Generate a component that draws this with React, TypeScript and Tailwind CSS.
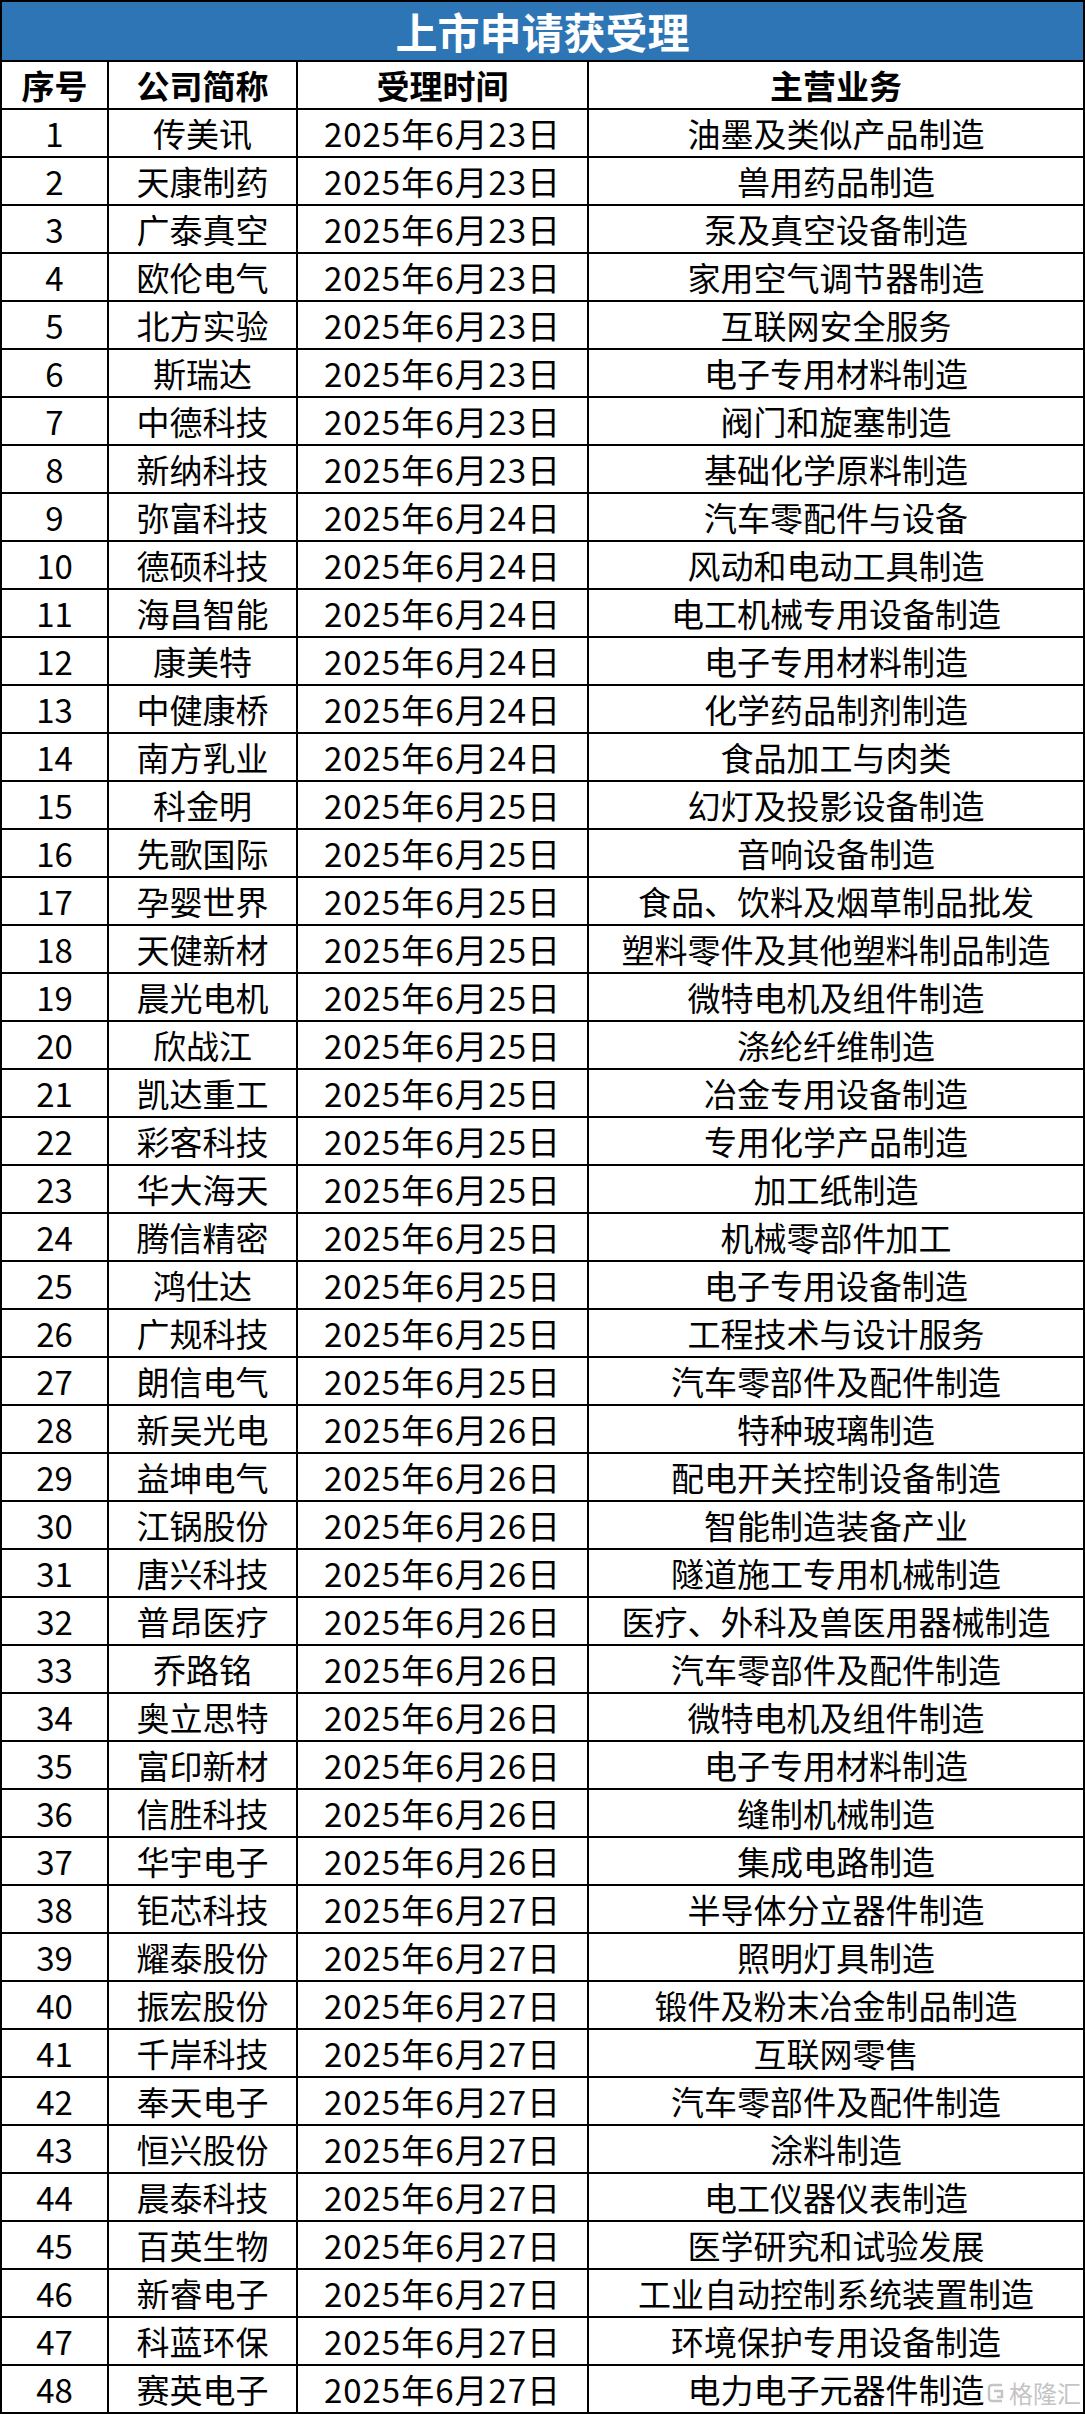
import React from 'react';

type Row = [string, string, string];

// [company, date suffix, business]
const rows: Row[] = [
  ['传美讯', '23', '油墨及类似产品制造'],
  ['天康制药', '23', '兽用药品制造'],
  ['广泰真空', '23', '泵及真空设备制造'],
  ['欧伦电气', '23', '家用空气调节器制造'],
  ['北方实验', '23', '互联网安全服务'],
  ['斯瑞达', '23', '电子专用材料制造'],
  ['中德科技', '23', '阀门和旋塞制造'],
  ['新纳科技', '23', '基础化学原料制造'],
  ['弥富科技', '24', '汽车零配件与设备'],
  ['德硕科技', '24', '风动和电动工具制造'],
  ['海昌智能', '24', '电工机械专用设备制造'],
  ['康美特', '24', '电子专用材料制造'],
  ['中健康桥', '24', '化学药品制剂制造'],
  ['南方乳业', '24', '食品加工与肉类'],
  ['科金明', '25', '幻灯及投影设备制造'],
  ['先歌国际', '25', '音响设备制造'],
  ['孕婴世界', '25', '食品、饮料及烟草制品批发'],
  ['天健新材', '25', '塑料零件及其他塑料制品制造'],
  ['晨光电机', '25', '微特电机及组件制造'],
  ['欣战江', '25', '涤纶纤维制造'],
  ['凯达重工', '25', '冶金专用设备制造'],
  ['彩客科技', '25', '专用化学产品制造'],
  ['华大海天', '25', '加工纸制造'],
  ['腾信精密', '25', '机械零部件加工'],
  ['鸿仕达', '25', '电子专用设备制造'],
  ['广规科技', '25', '工程技术与设计服务'],
  ['朗信电气', '25', '汽车零部件及配件制造'],
  ['新吴光电', '26', '特种玻璃制造'],
  ['益坤电气', '26', '配电开关控制设备制造'],
  ['江锅股份', '26', '智能制造装备产业'],
  ['唐兴科技', '26', '隧道施工专用机械制造'],
  ['普昂医疗', '26', '医疗、外科及兽医用器械制造'],
  ['乔路铭', '26', '汽车零部件及配件制造'],
  ['奥立思特', '26', '微特电机及组件制造'],
  ['富印新材', '26', '电子专用材料制造'],
  ['信胜科技', '26', '缝制机械制造'],
  ['华宇电子', '26', '集成电路制造'],
  ['钜芯科技', '27', '半导体分立器件制造'],
  ['耀泰股份', '27', '照明灯具制造'],
  ['振宏股份', '27', '锻件及粉末冶金制品制造'],
  ['千岸科技', '27', '互联网零售'],
  ['奉天电子', '27', '汽车零部件及配件制造'],
  ['恒兴股份', '27', '涂料制造'],
  ['晨泰科技', '27', '电工仪器仪表制造'],
  ['百英生物', '27', '医学研究和试验发展'],
  ['新睿电子', '27', '工业自动控制系统装置制造'],
  ['科蓝环保', '27', '环境保护专用设备制造'],
  ['赛英电子', '27', '电力电子元器件制造'],
];

const font = { fontFamily: '"Noto Sans CJK SC", "Noto Sans", sans-serif' };

function Cell({ children, className = '' }: { children: React.ReactNode; className?: string }) {
  return (
    <div
      className={`bg-white h-[46px] flex items-center justify-center text-[33px] leading-none text-black whitespace-nowrap ${className}`}
    >
      {children}
    </div>
  );
}

export default function App() {
  return (
    <div className="w-[1085px] h-[2414px] bg-white relative" style={font}>
      <div className="bg-black p-[2px] grid grid-cols-[105px_187px_289px_494px] gap-[2px]">
        <div className="col-span-4 h-[58px] bg-[#2e75b6] flex items-center justify-center text-white text-[42px] font-bold leading-none">
          上市申请获受理
        </div>
        <Cell className="font-bold">序号</Cell>
        <Cell className="font-bold">公司简称</Cell>
        <Cell className="font-bold">受理时间</Cell>
        <Cell className="font-bold">主营业务</Cell>
        {rows.map((r, i) => (
          <React.Fragment key={i}>
            <Cell>{i + 1}</Cell>
            <Cell>{r[0]}</Cell>
            <Cell className="tracking-[1px]">2025年6月{r[1]}日</Cell>
            <Cell>{r[2]}</Cell>
          </React.Fragment>
        ))}
      </div>

      {/* watermark */}
      <div className="absolute right-[4px] bottom-[9px] flex items-center gap-[4px] text-[#c4c4c4] text-[24px] leading-none [text-shadow:0_0_2px_#fff,0_0_1px_#fff]">
        <svg width="18" height="22" viewBox="0 0 18 22" fill="none" stroke="#c4c4c4" strokeWidth="2.4">
          <path d="M15 3H5a3 3 0 0 0-3 3v10a3 3 0 0 0 3 3h10" />
          <path d="M7 9h8v6h-5" />
        </svg>
        <span>格隆汇</span>
      </div>
    </div>
  );
}
